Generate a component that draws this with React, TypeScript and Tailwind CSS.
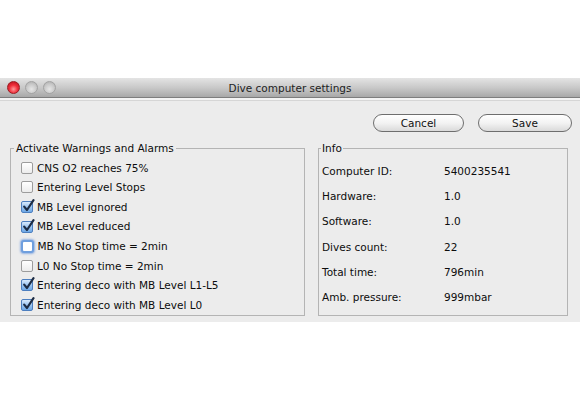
import React from "react";

const font = { fontFamily: '"DejaVu Sans", "Liberation Sans", sans-serif' };

function Check({ state }: { state: "on" | "off" | "focus" }) {
  if (state === "on") {
    return (
      <span className="relative w-[12px] h-[12px] rounded-[2px] border border-[#4d7fbf] bg-gradient-to-b from-[#d9eafc] via-[#9cc5f0] to-[#6ea8e6] shrink-0">
        <svg className="absolute left-[0px] top-[-3px]" width="13" height="14" viewBox="0 0 13 14">
          <path d="M2.2 7.6 L5 11 L11.5 1.2" fill="none" stroke="#1d2c44" strokeWidth="2.2" strokeLinecap="round" strokeLinejoin="round" />
        </svg>
      </span>
    );
  }
  if (state === "focus") {
    return (
      <span className="w-[13px] h-[13px] rounded-[3px] border-2 border-[#6f9fde] bg-white shadow-[0_0_2px_1px_rgba(90,140,220,0.6)] shrink-0 ml-[-0.5px]" />
    );
  }
  return (
    <span className="w-[12px] h-[12px] rounded-[2px] border border-[#9c9c9c] bg-gradient-to-b from-white to-[#ececec] shrink-0" />
  );
}

const warnings: { label: string; state: "on" | "off" | "focus" }[] = [
  { label: "CNS O2 reaches 75%", state: "off" },
  { label: "Entering Level Stops", state: "off" },
  { label: "MB Level ignored", state: "on" },
  { label: "MB Level reduced", state: "on" },
  { label: "MB No Stop time = 2min", state: "focus" },
  { label: "L0 No Stop time = 2min", state: "off" },
  { label: "Entering deco with MB Level L1-L5", state: "on" },
  { label: "Entering deco with MB Level L0", state: "on" },
];

const info: [string, string][] = [
  ["Computer ID:", "5400235541"],
  ["Hardware:", "1.0"],
  ["Software:", "1.0"],
  ["Dives count:", "22"],
  ["Total time:", "796min"],
  ["Amb. pressure:", "999mbar"],
];

export default function App() {
  return (
    <div className="w-[580px] h-[400px] bg-white pt-[78px] text-[#0d0d0d] text-[10.5px] overflow-hidden" style={font}>
      <div className="h-[244px] bg-[#ececec] flex flex-col">
        <div className="h-[20px] grid grid-cols-[1fr_auto_1fr] items-center bg-gradient-to-b from-[#e4e4e4] via-[#c9c9c9] to-[#a8a8a8] border-b border-[#7d7d7d]">
          <div className="flex items-center gap-[5px] pl-[7px]">
            <span className="w-[13px] h-[13px] rounded-full border border-[#9b1c22] bg-[radial-gradient(circle_at_50%_65%,#ff9a9a_0%,#f0303c_45%,#b10c18_100%)]" />
            <span className="w-[13px] h-[13px] rounded-full border border-[#a3a3a3] bg-[radial-gradient(circle_at_50%_65%,#e6e6e6_0%,#c9c9c9_55%,#a9a9a9_100%)]" />
            <span className="w-[13px] h-[13px] rounded-full border border-[#a3a3a3] bg-[radial-gradient(circle_at_50%_65%,#e6e6e6_0%,#c9c9c9_55%,#a9a9a9_100%)]" />
          </div>
          <div className="text-[10.5px] text-[#222] leading-none pt-[1px]">Dive computer settings</div>
          <div />
        </div>
        <div className="h-[3px] border-b border-[#d6d6d6] bg-[#f3f3f3]" />
        <div className="flex justify-end gap-[14px] pr-[8px] pt-[13px]">
          <button className="w-[91px] h-[18px] rounded-full border border-[#6e6e6e] bg-gradient-to-b from-white via-[#f3f3f3] to-[#dadada] text-[10.5px] leading-none text-[#111]">
            Cancel
          </button>
          <button className="w-[94px] h-[18px] rounded-full border border-[#6e6e6e] bg-gradient-to-b from-white via-[#f3f3f3] to-[#dadada] text-[10.5px] leading-none text-[#111]">
            Save
          </button>
        </div>
        <div className="flex gap-[13px] pl-[10px] pr-[12px] pt-[10px]">
          <fieldset className="w-[295px] border border-[#b4b4b4] p-0 m-0">
            <legend className="ml-[3px] px-[2px] leading-[13px]">Activate Warnings and Alarms</legend>
            <div className="flex flex-col pl-[10px] pt-[3px]">
              {warnings.map((w) => (
                <div key={w.label} className="h-[19.6px] flex items-center gap-[4px]">
                  <Check state={w.state} />
                  <span className="leading-none">{w.label}</span>
                </div>
              ))}
            </div>
          </fieldset>
          <fieldset className="w-[250px] border border-[#b4b4b4] p-0 m-0">
            <legend className="ml-[2px] px-[1px] leading-[13px]">Info</legend>
            <div className="flex flex-col pl-[3px] pt-[4px]">
              {info.map(([k, v]) => (
                <div key={k} className="h-[25.1px] flex items-center">
                  <span className="w-[122px] leading-none">{k}</span>
                  <span className="leading-none">{v}</span>
                </div>
              ))}
            </div>
          </fieldset>
        </div>
      </div>
    </div>
  );
}
